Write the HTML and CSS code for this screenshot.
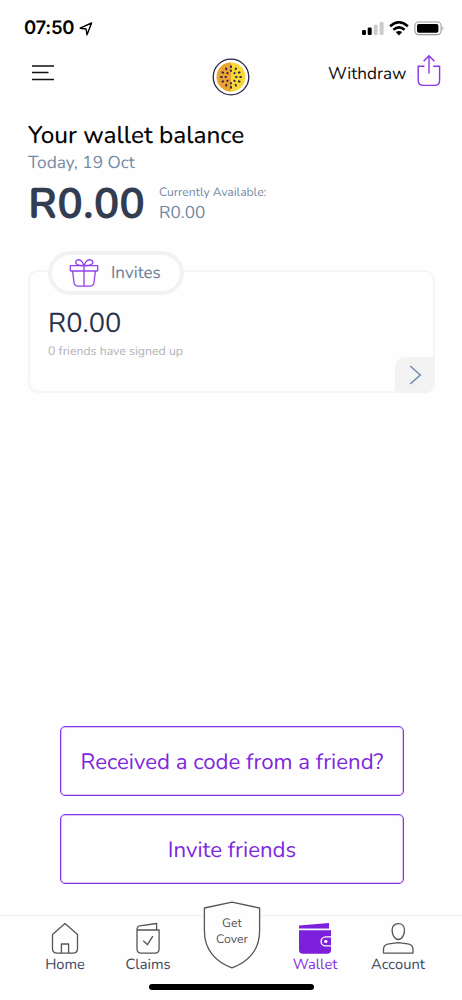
FILE: index.html
```html
<!DOCTYPE html>
<html lang="en">
<head>
<meta charset="utf-8">
<title>Wallet</title>
<link rel="stylesheet" href="styles.css">
</head>
<body>
<div class="screen">
  <div class="status">
    <span class="time">07:50</span>
    <svg class="locate" width="14" height="14" viewBox="0 0 14 14"><path d="M1.2 6.2 12.6 1 8 12.8 7.1 7Z" fill="none" stroke="#000" stroke-width="1.4" stroke-linejoin="round"/></svg>
    <svg class="indicators" width="84" height="16" viewBox="0 0 84 16">
      <rect x="0" y="9" width="4" height="5" rx="1.2"/><rect x="5.7" y="6.5" width="4" height="7.5" rx="1.2"/>
      <rect x="11.7" y="3.8" width="4" height="10.2" rx="1.2" fill="#ccc"/><rect x="17.6" y="1" width="4" height="13" rx="1.2" fill="#ccc"/>
      <g fill="none" stroke="#000" stroke-width="2.5"><path d="M28.1 5.2Q37 -2.6 45.9 5.2"/><path d="M31.4 8.8Q37 4 42.6 8.8"/></g>
      <path d="M33.7 11.1Q37 8.7 40.3 11.1L37 14.4Z"/>
      <rect x="52.9" y="1" width="26.2" height="12.6" rx="3.8" fill="none" stroke="#999" stroke-width="1.1"/>
      <rect x="55" y="3" width="21.4" height="8.8" rx="1.8"/><path d="M80.5 5.2Q82.5 7.2 80.5 9.4Z" fill="#999"/>
    </svg>
  </div>
  <header class="header">
    <svg class="menu" width="24" height="18" viewBox="0 0 24 18"><path d="M1 2H23M1 8.6H17.5M1 15.4H23" stroke="#111" stroke-width="1.5"/></svg>
    <svg class="logo" width="38" height="38" viewBox="0 0 38 38">
      <circle cx="19" cy="19" r="17.8" fill="#fff" stroke="#2b2548" stroke-width="1.3"/>
      <circle cx="19" cy="19" r="14.4" fill="#f9d936"/><path d="M19 4.6A14.4 14.4 0 0 0 19 33.4Z" fill="#eba434"/>
      <g stroke="#30264a" stroke-width="1.9" stroke-linecap="round">
        <path d="M19 8.2V9.2M19 28.8v1M9 19h.8M28.2 19h.8M14 10.4l.4.8M24 10.4l-.4.8M14 27.6l.4-.8M24 27.6l-.4-.8M10.4 14.3l.8.4M27.6 14.3l-.8.4M10.4 23.7l.8-.4M27.6 23.7l-.8-.4"/>
        <path d="M19 12.4v.6M19 25v.6M13.4 19h.6M24 19h.6M15.3 15l.4.4M22.7 15l-.4.4M15.3 23l.4-.4M22.7 23l-.4-.4"/>
      </g>
    </svg>
    <div class="withdraw"><span>Withdraw</span>
      <svg width="24" height="34" viewBox="0 0 24 34" fill="none" stroke="#8a35e8" stroke-width="1.4"><path d="M7.4 12.2H1.2V26.2Q1.2 31.4 6.4 31.4H17.4Q22.6 31.4 22.6 26.2V12.2H16.2M12 19.5V2M6.6 7.2 12 1.7 17.4 7.2"/></svg>
    </div>
  </header>
  <main class="main">
    <h1 class="title">Your wallet balance</h1>
    <p class="date">Today, 19 Oct</p>
    <div class="balance">
      <strong class="total">R0.00</strong>
      <div class="available"><span class="available-label">Currently Available:</span><span class="available-sum">R0.00</span></div>
    </div>
    <section class="card">
      <div class="pill">
        <svg width="30" height="30" viewBox="0 0 30 30" fill="none" stroke="#9140ea" stroke-width="1.3"><rect x="1.3" y="7.6" width="27.4" height="5.4" rx=".5"/><path d="M3.6 13 5 24.5Q5.5 28.2 9 28.2H21Q24.5 28.2 25 24.5L26.4 13M15 7.6V28.2M15 7.4C11.5 7.8 6.7 7 6.7 4.3 6.7 1.8 10 1 12 2.7 14 4.4 14.6 6.3 15 7.4ZM15 7.4C18.5 7.8 23.9 7 23.9 4.3 23.9 1.8 20 1 18 2.7 16 4.4 15.4 6.3 15 7.4Z"/></svg>
        <span>Invites</span>
      </div>
      <div class="invite-sum">R0.00</div>
      <div class="friends">0 friends have signed up</div>
      <div class="more"><svg width="13" height="20" viewBox="0 0 13 20"><path d="M1.2 1 11.3 10 1.2 19" fill="none" stroke="#718bab" stroke-width="1.5"/></svg></div>
    </section>
    <div class="actions">
      <div class="button code">Received a code from a friend?</div>
      <div class="button invite">Invite friends</div>
    </div>
  </main>
  <nav class="tabs">
    <div class="tab home"><svg width="34" height="34" viewBox="0 0 34 34"><path d="M17 1.5 4.5 12.5V26.5Q4.5 31.1 9.1 31.1H24.9Q29.5 31.1 29.5 26.5V12.5ZM13.4 31V22H20.6V31"/></svg><span>Home</span></div>
    <div class="tab claims"><svg width="34" height="34" viewBox="0 0 34 34"><path d="M6 8V27Q6 31.1 10.1 31.1H24Q28.1 31.1 28.1 27V8ZM6 8Q6 4.2 8.7 3.8L25.6 1.5V8M12.3 18.7 16.5 22.7 21.8 14.2"/></svg><span>Claims</span></div>
    <div class="tab cover"><svg width="58" height="68" viewBox="0 0 58 68"><path d="M29 1.2 56.6 7V30C56.6 50 44 61.5 29 66.8 14 61.5 1.4 50 1.4 30V7Z"/></svg><span class="cover-text">Get<br>Cover</span></div>
    <div class="tab wallet"><svg width="34" height="34" viewBox="0 0 34 34"><path class="solid" d="M1 3.5 31 1V6.6H1ZM1 8.2H33V14.2H27.6A5.2 5.2 0 0 0 27.6 24.6H33V28Q33 31.8 29.2 31.8H4.8Q1 31.8 1 28ZM33 15.6V23.2H27.6A3.8 3.8 0 0 1 27.6 15.6Z"/><circle cx="27.8" cy="19.4" r="1.7" fill="#fff"/></svg><span>Wallet</span></div>
    <div class="tab account"><svg width="34" height="34" viewBox="0 0 34 34"><path d="M17.3 1.6C21.3 1.6 23.5 4.5 23.5 8.1 23.5 12.5 21.2 17.5 17.3 17.5S11.1 12.5 11.1 8.1C11.1 4.5 13.3 1.6 17.3 1.6ZM2.5 31.1V27.5Q2.5 22.7 7.8 21.9L17.3 20.7 26.8 21.9Q32 22.7 32 27.5V31.1Z"/></svg><span>Account</span></div>
  </nav>
  <div class="indicator"></div>
</div>
</body>
</html>
```
FILE: styles.css
```css
* { box-sizing: border-box; }
body { margin: 0; background: #fefefe; font-family: Nunito, Lato, "Open Sans", sans-serif; text-rendering: geometricPrecision; }
svg { display: block; flex: none; }
.screen { width: 462px; height: 1000px; display: flex; flex-direction: column; overflow: hidden; background: #fefefe; }
.status { height: 50px; display: flex; align-items: flex-start; padding: 16px 16px 0 24px; flex: none; }
.time { font: 600 18.5px/25px Inter, sans-serif; width: 52px; white-space: nowrap; letter-spacing: -.3px; }
.locate { margin: 6px 0 0 3px; }
.indicators { margin: 5px 0 0 auto; }
.header { height: 54px; flex: none; display: flex; align-items: flex-start; padding: 4px 21px 0 31px; }
.menu { margin-top: 10px; }
.logo { margin: 4px 0 0 157px; }
.withdraw { margin-left: auto; display: flex; gap: 8px; font-size: 17.1px; line-height: 41px; color: #0c0c0e; white-space: nowrap; }
.withdraw span { width: 81px; }
.main { flex: 1; display: flex; flex-direction: column; padding: 16px 28px 0; }
.title { margin: 0; font-size: 24.3px; line-height: 30px; font-weight: 550; color: #050505; white-space: nowrap; }
.date { margin: 1px 0 0; font-size: 17.3px; line-height: 26px; color: #7489a5; }
.balance { display: flex; height: 54px; margin-top: 2px; }
.total { width: 131px; font-size: 42.8px; line-height: 52px; font-weight: 700; color: #323d52; }
.available { display: flex; flex-direction: column; color: #7489a5; }
.available-label { font-size: 12.1px; line-height: 18px; padding-top: 5px; white-space: nowrap; height: 24px; }
.available-sum { font-size: 17.2px; line-height: 22px; }
.card { width: 407px; height: 123px; margin-top: 37px; position: relative; border: 2px solid #f5f5f6; border-radius: 10px; padding-left: 18px; flex: none; }
.pill { width: 136px; height: 44px; margin-top: -21px; border: 4px solid #f2f2f3; border-radius: 22px; background: #fefefe; display: flex; align-items: center; padding-left: 17px; gap: 12px; font-size: 17px; color: #687d99; }
.invite-sum { margin-top: 11px; font-size: 27.2px; line-height: 36px; color: #28314a; }
.friends { font-size: 12.3px; line-height: 20px; color: #b3b3b5; }
.more { position: absolute; right: -2px; bottom: -2px; width: 40px; height: 36px; background: #f3f3f4; border-radius: 10px 0 10px 0; display: flex; align-items: center; justify-content: center; }
.actions { margin: auto 30px 31px 32px; display: flex; flex-direction: column; gap: 18px; }
.button { width: 344px; height: 70px; border: 1px solid #8434df; box-shadow: inset 0 0 0 1px #dcc5f6; border-radius: 5px; color: #7d28dd; font-size: 22.2px; line-height: 70px; text-align: center; white-space: nowrap; }
.tabs { height: 69px; flex: none; border-top: 1px solid #f0f0f1; display: grid; grid-template-columns: 82px 84px 84px 82px 84px; padding-left: 24px; }
.tab { display: flex; flex-direction: column; align-items: center; padding-top: 6px; font-size: 14.7px; line-height: 19px; color: #3d4861; }
.tab path { fill: none; stroke: #555558; stroke-width: 1.3; stroke-linejoin: round; }
.tab .solid { fill: #7d20dc; stroke: none; }
.wallet { color: #8432e0; }
.cover { position: relative; padding: 0; margin-top: -15px; }
.cover path { fill: #fefefe; }
.cover .cover-text { position: absolute; top: 15px; left: 0; width: 100%; text-align: center; font-size: 12.3px; line-height: 16px; color: #555558; }
.indicator { flex: none; width: 165px; height: 6px; margin: 0 0 10px 149px; border-radius: 3px; background: #000; }
```
